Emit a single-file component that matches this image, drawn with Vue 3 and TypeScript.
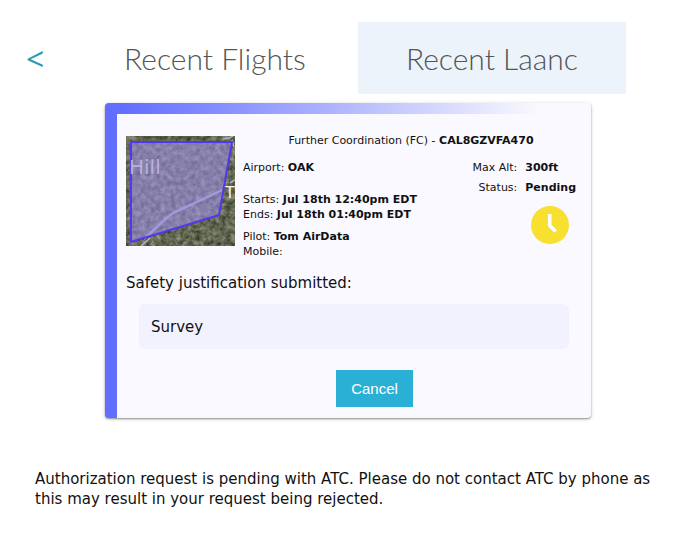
<script setup lang="ts">
interface Authorization {
  kind: string
  code: string
  airport: string
  starts: string
  ends: string
  pilot: string
  mobile: string
  maxAlt: string
  status: string
  justification: string
}

const request: Authorization = {
  kind: 'Further Coordination (FC)',
  code: 'CAL8GZVFA470',
  airport: 'OAK',
  starts: 'Jul 18th 12:40pm EDT',
  ends: 'Jul 18th 01:40pm EDT',
  pilot: 'Tom AirData',
  mobile: '',
  maxAlt: '300ft',
  status: 'Pending',
  justification: 'Survey',
}
</script>

<template>
  <main class="page">
    <nav class="tabs">
      <a class="back" href="#">&lt;</a>
      <a class="tab" href="#flights">Recent Flights</a>
      <a class="tab active" href="#laanc">Recent Laanc</a>
    </nav>

    <section class="card">
      <div class="body">
        <div class="summary">
          <svg class="map" viewBox="0 0 109 110" aria-hidden="true">
            <defs>
              <filter id="ground" x="0" y="0" width="100%" height="100%" color-interpolation-filters="sRGB">
                <feTurbulence type="fractalNoise" baseFrequency="0.2" numOctaves="4" seed="8" />
                <feColorMatrix
                  values="0.5 0.25 0 0 0.01  0.5 0.25 0 0 0.03  0.48 0.22 0 0 -0.03  0 0 0 0 1"
                />
              </filter>
            </defs>
            <rect width="109" height="110" fill="#5c6450" />
            <rect width="109" height="110" filter="url(#ground)" />
            <path d="M97 3l6-1 4-2M106 4l2 7M104 47l5-3M15 110l9-8" fill="none" stroke="#aeb7bd" stroke-width="1.5" />
            <path d="M18 103C27 96 38 82 49 76C64 69 78 63 96 54" fill="none" stroke="#9eaac8" stroke-width="2.5" />
            <polygon points="5,6 106,6 93,79 5,106" fill="#a090ea" fill-opacity="0.58" stroke="#5138f0" stroke-width="2" />
            <text x="3" y="38" class="place">Hill</text>
            <text x="99" y="62" class="place small">T</text>
          </svg>

          <div class="info">
            <div class="heading">{{ request.kind }} - <b>{{ request.code }}</b></div>
            <div class="columns">
              <div class="left">
                <p class="airport">Airport: <b>{{ request.airport }}</b></p>
                <p>Starts: <b>{{ request.starts }}</b></p>
                <p>Ends: <b>{{ request.ends }}</b></p>
                <p class="pilot">Pilot: <b>{{ request.pilot }}</b></p>
                <p>Mobile: <b>{{ request.mobile }}</b></p>
              </div>
              <div class="right">
                <dl>
                  <dt>Max Alt:</dt>
                  <dd>{{ request.maxAlt }}</dd>
                  <dt>Status:</dt>
                  <dd>{{ request.status }}</dd>
                </dl>
                <svg class="clock" viewBox="0 0 38 38" aria-hidden="true">
                  <circle cx="19" cy="19" r="19" fill="#f7e030" />
                  <path d="M18.7 8v11.5l6 6" fill="none" stroke="#fff" stroke-width="3.6" />
                </svg>
              </div>
            </div>
          </div>
        </div>

        <h2 class="label">Safety justification submitted:</h2>
        <div class="justification">{{ request.justification }}</div>
        <div class="actions">
          <button type="button">Cancel</button>
        </div>
      </div>
    </section>

    <p class="notice">
      Authorization request is pending with ATC. Please do not contact ATC by phone as this may result in your
      request being rejected.
    </p>
  </main>
</template>

<style>
body {
  background: #fff;
}
</style>

<style scoped>
.page {
  padding-top: 22px;
  font-family: Verdana, 'DejaVu Sans', sans-serif;
  color: #111;
}

p,
dl,
dd,
h2 {
  margin: 0;
}

.tabs {
  display: grid;
  grid-template-columns: 72px 16fr 15fr;
  padding-right: 72px;
  height: 72px;
}

.tabs a {
  display: flex;
  align-items: center;
  justify-content: center;
  text-decoration: none;
}

.tabs .back {
  justify-content: flex-start;
  padding-left: 26px;
  font-family: 'Open Sans', sans-serif;
  font-size: 32px;
  color: #2a9bb5;
}

.tab {
  font-family: Lato, sans-serif;
  font-weight: 300;
  font-size: 30px;
  color: #555;
}

.tab.active {
  background: #ecf3fa;
}

.card {
  margin: 9px 107px 0 105px;
  padding: 11px 0 0 12px;
  border-radius: 4px;
  background:
    linear-gradient(#626eff, #626eff) left / 12px 100% no-repeat,
    linear-gradient(98deg, #626eff 4%, #faf9ff 98%) top left / 91% 11px no-repeat,
    #faf9ff;
  box-shadow: 0 1px 2px rgba(0, 0, 0, 0.4), 0 1px 5px rgba(0, 0, 0, 0.12);
}

.body {
  padding: 19px 12px 11px 9px;
}

.summary {
  display: flex;
  gap: 8px;
}

.map {
  flex: none;
  width: 109px;
  height: 110px;
  margin-top: 3px;
}

.place {
  font-family: 'DejaVu Sans', sans-serif;
  font-size: 20px;
  fill: #b9b0dc;
}

.place.small {
  font-size: 16px;
  fill: #f0f0ec;
}

.info {
  flex: 1;
  font-size: 11px;
  line-height: 15px;
}

.heading {
  text-align: center;
}

.columns {
  display: flex;
  justify-content: space-between;
  padding-top: 12px;
}

.airport {
  margin-bottom: 17px;
}

.pilot {
  margin-top: 7px;
}

.right {
  display: flex;
  flex-direction: column;
  align-items: flex-end;
}

dl {
  display: grid;
  grid-template-columns: auto auto;
  gap: 5px 8px;
  padding-right: 3px;
}

dt {
  text-align: right;
}

dd {
  font-weight: bold;
}

.clock {
  width: 38px;
  height: 38px;
  margin: 11px 10px 0 0;
}

.label {
  margin-top: 14px;
  font-size: 15px;
  font-weight: normal;
  line-height: 20px;
}

.justification {
  margin: 11px 10px 0 13px;
  padding: 13px 12px 12px;
  border-radius: 6px;
  background: #f2f2ff;
  font-size: 15px;
  line-height: 20px;
}

.actions {
  display: flex;
  justify-content: center;
  padding: 21px 0 0 44px;
}

button {
  padding: 0 15px;
  height: 37px;
  border: 0;
  background: #2bb0d5;
  color: #fff;
  font-family: 'Liberation Sans', Arial, sans-serif;
  font-size: 15px;
}

.notice {
  margin: 51px 35px 0;
  font-size: 15px;
  line-height: 20px;
}
</style>
